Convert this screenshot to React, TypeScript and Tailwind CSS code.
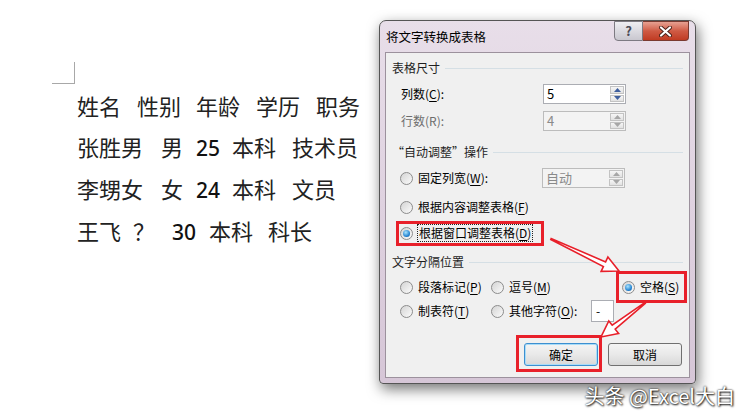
import React from "react";

type Tok = { t: string; w: number; num?: boolean };

const docLines: Tok[][] = [
  [{ t: "姓名", w: 60 }, { t: "性别", w: 59 }, { t: "年龄", w: 60 }, { t: "学历", w: 60 }, { t: "职务", w: 50 }],
  [{ t: "张胜男", w: 84 }, { t: "男", w: 35 }, { t: "25", w: 36, num: true }, { t: "本科", w: 60 }, { t: "技术员", w: 70 }],
  [{ t: "李甥女", w: 84 }, { t: "女", w: 35 }, { t: "24", w: 36, num: true }, { t: "本科", w: 60 }, { t: "文员", w: 50 }],
  [{ t: "王飞", w: 56 }, { t: "？", w: 39 }, { t: "30", w: 37, num: true }, { t: "本科", w: 59 }, { t: "科长", w: 50 }],
];

// access-key label, e.g. 列数(C):
const Key = ({ pre, k, post = ")" }: { pre: string; k: string; post?: string }) => (
  <span>
    {pre}(<span className="underline underline-offset-[2px]">{k}</span>
    {post}
  </span>
);

const Radio = ({ checked = false }: { checked?: boolean }) => (
  <span className="flex h-[13px] w-[13px] shrink-0 items-center justify-center rounded-full border border-[#8c8c8c] bg-linear-to-br from-[#d4d4d4] to-[#fbfbfb]">
    {checked && (
      <span className="h-[7px] w-[7px] rounded-full bg-[radial-gradient(circle_at_40%_35%,#a8e4ff,#1f80cf_65%,#0d4c8c)]" />
    )}
  </span>
);

const Arrow = ({ up, disabled }: { up?: boolean; disabled?: boolean }) => (
  <svg width="7" height="4" viewBox="0 0 7 4">
    <polygon
      points={up ? "0,4 3.5,0 7,4" : "0,0 3.5,4 7,0"}
      fill={disabled ? "#a7a7a7" : "#3f5f9e"}
    />
  </svg>
);

const Spin = ({ value, disabled }: { value: string; disabled?: boolean }) => (
  <div
    className={
      disabled
        ? "flex h-[20px] w-[83px] border border-[#bcbcbc] bg-[#f3f3f3] text-[#8a8a8a]"
        : "flex h-[20px] w-[83px] border border-[#abadb3] bg-white text-black"
    }
  >
    <div className="flex flex-1 items-center pl-[3px] text-[13px]">{value}</div>
    <div className="flex w-[16px] flex-col gap-px p-px">
      <div className="flex flex-1 items-center justify-center border border-[#c3c3c3] bg-linear-to-b from-[#f6f6f6] to-[#e2e2e2]">
        <Arrow up disabled={disabled} />
      </div>
      <div className="flex flex-1 items-center justify-center border border-[#c3c3c3] bg-linear-to-b from-[#f6f6f6] to-[#e2e2e2]">
        <Arrow disabled={disabled} />
      </div>
    </div>
  </div>
);

const Header = ({ text }: { text: string }) => (
  <div className="flex h-[18px] items-center gap-[5px] pl-[6px] pr-[6px] text-[#1e1e1e]">
    <span>{text}</span>
    <span className="h-px flex-1 bg-[#d5dfe5]" />
  </div>
);

const Dialog = () => (
  <div className="absolute left-[379px] top-[20px] flex h-[364px] w-[317px] flex-col rounded-t-[7px] rounded-b-[4px] border border-[#555555] bg-linear-to-b from-[#e8dee9] to-[#d6c6d7] px-[5px] pb-[5px] text-[12px] shadow-[2px_5px_14px_rgba(0,0,0,0.55)] font-['Noto_Sans_CJK_SC',sans-serif]">
    {/* title bar */}
    <div className="flex h-[31px] items-start">
      <span className="ml-px mt-[7px] text-[12.5px] text-black">将文字转换成表格</span>
      <div className="ml-auto mr-px flex">
        <div className="flex h-[20px] w-[29px] items-center justify-center rounded-bl-[4px] border border-[#7d7a82] bg-linear-to-b from-[#eeeef2] to-[#c9c7cf] text-[13px] font-bold text-[#4a4a55]">
          ?
        </div>
        <div className="flex h-[20px] w-[46px] items-center justify-center rounded-br-[4px] border border-l-0 border-[#7a3a30] bg-linear-to-b from-[#e6a092] via-[#cf5a44] to-[#c03b22]">
          <svg width="13" height="11" viewBox="0 0 13 11">
            <path d="M2 1.5 L11 9.5 M11 1.5 L2 9.5" stroke="#4a2018" strokeWidth="4" strokeLinecap="round" />
            <path d="M2 1.5 L11 9.5 M11 1.5 L2 9.5" stroke="#ffffff" strokeWidth="2.2" strokeLinecap="round" />
          </svg>
        </div>
      </div>
    </div>

    {/* client area */}
    <div className="flex flex-1 flex-col border border-[#9c919d] bg-[#f0f0f0] text-black">
      <div className="mt-[6px]">
        <Header text="表格尺寸" />
      </div>
      <div className="mt-[7px] flex h-[20px] items-center pl-[15px]">
        <span className="w-[142px]"><Key pre="列数" k="C" post="):" /></span>
        <Spin value="5" />
      </div>
      <div className="mt-[7px] flex h-[20px] items-center pl-[15px] text-[#6d6d6d]">
        <span className="w-[142px]">行数(R):</span>
        <Spin value="4" disabled />
      </div>

      <div className="mt-[12px]">
        <Header text="“自动调整”操作" />
      </div>
      <div className="mt-[7px] flex h-[20px] items-center pl-[14px]">
        <Radio />
        <span className="ml-[5px] w-[124px]"><Key pre="固定列宽" k="W" post="):" /></span>
        <Spin value="自动" disabled />
      </div>
      <div className="mt-[10px] flex h-[18px] items-center pl-[14px]">
        <Radio />
        <span className="ml-[5px]"><Key pre="根据内容调整表格" k="F" /></span>
      </div>
      <div className="mt-[8px] flex h-[18px] items-center pl-[14px]">
        <Radio checked />
        <span className="ml-[4px] border border-dotted border-[#222] px-px leading-[16px]">
          <Key pre="根据窗口调整表格" k="D" />
        </span>
      </div>

      <div className="mt-[11px]">
        <Header text="文字分隔位置" />
      </div>
      <div className="mt-[6px] flex h-[20px] items-center pl-[14px]">
        <div className="flex w-[91px] items-center">
          <Radio />
          <span className="ml-[5px]"><Key pre="段落标记" k="P" /></span>
        </div>
        <div className="flex w-[131px] items-center">
          <Radio />
          <span className="ml-[5px]"><Key pre="逗号" k="M" /></span>
        </div>
        <div className="flex items-center">
          <Radio checked />
          <span className="ml-[5px]"><Key pre="空格" k="S" /></span>
        </div>
      </div>
      <div className="mt-[3px] flex h-[22px] items-center pl-[14px]">
        <div className="flex w-[91px] items-center">
          <Radio />
          <span className="ml-[5px]"><Key pre="制表符" k="T" /></span>
        </div>
        <div className="flex items-center">
          <Radio />
          <span className="ml-[5px] w-[82px]"><Key pre="其他字符" k="O" post="):" /></span>
          <div className="flex h-[22px] w-[23px] items-center border border-[#abadb3] bg-white pl-[4px] text-[12px]">-</div>
        </div>
      </div>

      <div className="mt-[21px] flex justify-end gap-[10px] pr-[7px]">
        <button className="flex h-[23px] w-[74px] items-center justify-center rounded-[3px] border border-[#3c8fd0] bg-linear-to-b from-[#f4f4f4] via-[#e9e9e9] to-[#d8d8d8] text-[12px] shadow-[inset_0_0_0_1px_#a9dcf8]">
          确定
        </button>
        <button className="flex h-[23px] w-[74px] items-center justify-center rounded-[3px] border border-[#707070] bg-linear-to-b from-[#f4f4f4] via-[#e9e9e9] to-[#d8d8d8] text-[12px]">
          取消
        </button>
      </div>
    </div>
  </div>
);

export default function App() {
  return (
    <div className="relative h-[419px] w-[746px] overflow-hidden bg-white">
      {/* document page */}
      <div className="flex flex-col">
        <div className="ml-[52px] mt-[62px] h-[22px] w-[23px] border-b border-r border-[#a8a8a8]" />
        <div className="flex flex-col pl-[77px] text-[#222] font-['Noto_Sans_CJK_SC',sans-serif]">
          {docLines.map((line, i) => (
            <div key={i} className="flex h-[42px] items-center">
              <div className="flex items-baseline text-[22px] leading-[30px]">
                {line.map((tok, j) =>
                  tok.num ? (
                    <span key={j} style={{ width: tok.w }} className="shrink-0 text-[21px] font-medium text-[#111] font-['Noto_Sans',sans-serif]">
                      {tok.t}
                    </span>
                  ) : (
                    <span key={j} style={{ width: tok.w }} className="shrink-0">
                      {tok.t}
                    </span>
                  )
                )}
              </div>
            </div>
          ))}
        </div>
      </div>

      <Dialog />

      {/* red annotation boxes */}
      <div className="pointer-events-none absolute left-[396px] top-[221px] h-[25px] w-[148px] border-[3px] border-[#e8202a]" />
      <div className="pointer-events-none absolute left-[616px] top-[271px] h-[32px] w-[71px] border-[3px] border-[#e8202a]" />
      <div className="pointer-events-none absolute left-[516px] top-[335px] h-[37px] w-[86px] border-[3px] border-[#e8202a]" />

      {/* arrows */}
      <svg className="pointer-events-none absolute left-0 top-0" width="746" height="419" viewBox="0 0 746 419">
        <polygon
          points="550.8,239.5 603.4,266.5 601.1,271.4 619,271 607.9,257 605.6,261.9 551.2,238.5"
          fill="#ffffff"
          stroke="#e8202a"
          strokeWidth="1.6"
          strokeLinejoin="miter"
        />
        <polygon
          points="644.7,302.6 612.2,325.2 608.8,320.9 601,337 618.6,333.5 615.2,329.2 645.3,303.4"
          fill="#ffffff"
          stroke="#e8202a"
          strokeWidth="1.6"
          strokeLinejoin="miter"
        />
      </svg>

      {/* watermark */}
      <div className="absolute bottom-[12px] right-[11px] text-[20px] leading-[22px] text-white [text-shadow:0_0_2px_#000,1px_1px_2px_#222] font-['Noto_Sans_CJK_SC',sans-serif]">
        头条 @Excel大白
      </div>
    </div>
  );
}
